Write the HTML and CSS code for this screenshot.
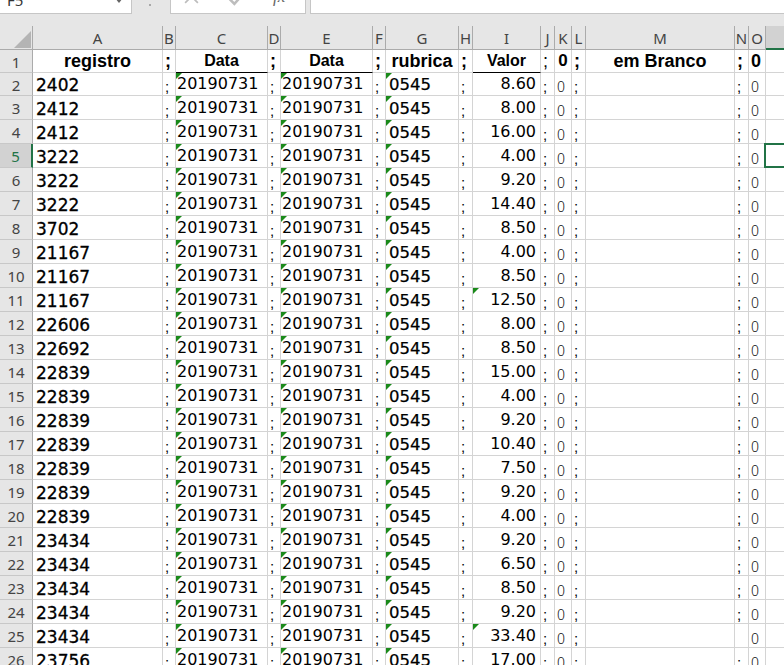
FILE: index.html
```html
<!DOCTYPE html>
<html>
<head>
<meta charset="utf-8">
<title>Planilha</title>
<link rel="stylesheet" href="styles.css">
</head>
<body>
<div class="topbar">
  <div class="namebox"><span class="nb-text">F5</span><span class="nb-arrow"></span></div>
  <div class="dots"></div>
  <div class="fbtns">
    <svg class="ic ic-x" viewBox="0 0 16 16"><path d="M2 2 L14 14 M14 2 L2 14" /></svg>
    <svg class="ic ic-ok" viewBox="0 0 16 16"><path d="M1 8 L6 13 L15 3" /></svg>
    <span class="fx">fx</span>
  </div>
  <div class="finput"></div>
</div>

<div class="sheet">
  <div class="hrow">
    <div class="ch corner"><svg class="selall" viewBox="0 0 16 16"><polygon points="16,0 16,16 0,16" /></svg></div>
    <div class="ch">A</div><div class="ch">B</div><div class="ch">C</div><div class="ch">D</div><div class="ch">E</div><div class="ch">F</div><div class="ch">G</div><div class="ch">H</div><div class="ch">I</div><div class="ch">J</div><div class="ch">K</div><div class="ch">L</div><div class="ch">M</div><div class="ch">N</div><div class="ch">O</div><div class="ch chsel">P</div>
  </div>

  <div class="row row1">
    <div class="rh">1</div>
    <div class="c h1">registro</div><div class="c h1 hs">;</div><div class="c h1 hd ul">Data</div><div class="c h1 hs">;</div><div class="c h1 hd ul">Data</div><div class="c h1 hs">;</div><div class="c h1">rubrica</div><div class="c h1 hs">;</div><div class="c h1 hd ul">Valor</div><div class="c h1 hs thin">;</div><div class="c h1 hz">0</div><div class="c h1 hs">;</div><div class="c h1">em Branco</div><div class="c h1 hs">;</div><div class="c h1 hs">0</div><div class="c"></div>
  </div>

  <div class="row r2"><div class="rh">2</div><div class="c ca">2402</div><div class="c sc">;</div><div class="c cd tri">20190731</div><div class="c sc">;</div><div class="c cd tri">20190731</div><div class="c sc">;</div><div class="c cg tri">0545</div><div class="c sc">;</div><div class="c cv">8.60</div><div class="c sc">;</div><div class="c cz">0</div><div class="c sc">;</div><div class="c"></div><div class="c sc">;</div><div class="c cz">0</div><div class="c"></div></div>
  <div class="row"><div class="rh">3</div><div class="c ca">2412</div><div class="c sc">;</div><div class="c cd tri">20190731</div><div class="c sc">;</div><div class="c cd tri">20190731</div><div class="c sc">;</div><div class="c cg tri">0545</div><div class="c sc">;</div><div class="c cv">8.00</div><div class="c sc">;</div><div class="c cz">0</div><div class="c sc">;</div><div class="c"></div><div class="c sc">;</div><div class="c cz">0</div><div class="c"></div></div>
  <div class="row"><div class="rh">4</div><div class="c ca">2412</div><div class="c sc">;</div><div class="c cd tri">20190731</div><div class="c sc">;</div><div class="c cd tri">20190731</div><div class="c sc">;</div><div class="c cg tri">0545</div><div class="c sc">;</div><div class="c cv">16.00</div><div class="c sc">;</div><div class="c cz">0</div><div class="c sc">;</div><div class="c"></div><div class="c sc">;</div><div class="c cz">0</div><div class="c"></div></div>
  <div class="row"><div class="rh rhsel">5</div><div class="c ca">3222</div><div class="c sc">;</div><div class="c cd tri">20190731</div><div class="c sc">;</div><div class="c cd tri">20190731</div><div class="c sc">;</div><div class="c cg tri">0545</div><div class="c sc">;</div><div class="c cv">4.00</div><div class="c sc">;</div><div class="c cz">0</div><div class="c sc">;</div><div class="c"></div><div class="c sc">;</div><div class="c cz">0</div><div class="c cur"></div></div>
  <div class="row"><div class="rh">6</div><div class="c ca">3222</div><div class="c sc">;</div><div class="c cd tri">20190731</div><div class="c sc">;</div><div class="c cd tri">20190731</div><div class="c sc">;</div><div class="c cg tri">0545</div><div class="c sc">;</div><div class="c cv">9.20</div><div class="c sc">;</div><div class="c cz">0</div><div class="c sc">;</div><div class="c"></div><div class="c sc">;</div><div class="c cz">0</div><div class="c"></div></div>
  <div class="row"><div class="rh">7</div><div class="c ca">3222</div><div class="c sc">;</div><div class="c cd tri">20190731</div><div class="c sc">;</div><div class="c cd tri">20190731</div><div class="c sc">;</div><div class="c cg tri">0545</div><div class="c sc">;</div><div class="c cv">14.40</div><div class="c sc">;</div><div class="c cz">0</div><div class="c sc">;</div><div class="c"></div><div class="c sc">;</div><div class="c cz">0</div><div class="c"></div></div>
  <div class="row"><div class="rh">8</div><div class="c ca">3702</div><div class="c sc">;</div><div class="c cd tri">20190731</div><div class="c sc">;</div><div class="c cd tri">20190731</div><div class="c sc">;</div><div class="c cg tri">0545</div><div class="c sc">;</div><div class="c cv">8.50</div><div class="c sc">;</div><div class="c cz">0</div><div class="c sc">;</div><div class="c"></div><div class="c sc">;</div><div class="c cz">0</div><div class="c"></div></div>
  <div class="row"><div class="rh">9</div><div class="c ca">21167</div><div class="c sc">;</div><div class="c cd tri">20190731</div><div class="c sc">;</div><div class="c cd tri">20190731</div><div class="c sc">;</div><div class="c cg tri">0545</div><div class="c sc">;</div><div class="c cv">4.00</div><div class="c sc">;</div><div class="c cz">0</div><div class="c sc">;</div><div class="c"></div><div class="c sc">;</div><div class="c cz">0</div><div class="c"></div></div>
  <div class="row"><div class="rh">10</div><div class="c ca">21167</div><div class="c sc">;</div><div class="c cd tri">20190731</div><div class="c sc">;</div><div class="c cd tri">20190731</div><div class="c sc">;</div><div class="c cg tri">0545</div><div class="c sc">;</div><div class="c cv">8.50</div><div class="c sc">;</div><div class="c cz">0</div><div class="c sc">;</div><div class="c"></div><div class="c sc">;</div><div class="c cz">0</div><div class="c"></div></div>
  <div class="row"><div class="rh">11</div><div class="c ca">21167</div><div class="c sc">;</div><div class="c cd tri">20190731</div><div class="c sc">;</div><div class="c cd tri">20190731</div><div class="c sc">;</div><div class="c cg tri">0545</div><div class="c sc">;</div><div class="c cv tri">12.50</div><div class="c sc">;</div><div class="c cz">0</div><div class="c sc">;</div><div class="c"></div><div class="c sc">;</div><div class="c cz">0</div><div class="c"></div></div>
  <div class="row"><div class="rh">12</div><div class="c ca">22606</div><div class="c sc">;</div><div class="c cd tri">20190731</div><div class="c sc">;</div><div class="c cd tri">20190731</div><div class="c sc">;</div><div class="c cg tri">0545</div><div class="c sc">;</div><div class="c cv">8.00</div><div class="c sc">;</div><div class="c cz">0</div><div class="c sc">;</div><div class="c"></div><div class="c sc">;</div><div class="c cz">0</div><div class="c"></div></div>
  <div class="row"><div class="rh">13</div><div class="c ca">22692</div><div class="c sc">;</div><div class="c cd tri">20190731</div><div class="c sc">;</div><div class="c cd tri">20190731</div><div class="c sc">;</div><div class="c cg tri">0545</div><div class="c sc">;</div><div class="c cv">8.50</div><div class="c sc">;</div><div class="c cz">0</div><div class="c sc">;</div><div class="c"></div><div class="c sc">;</div><div class="c cz">0</div><div class="c"></div></div>
  <div class="row"><div class="rh">14</div><div class="c ca">22839</div><div class="c sc">;</div><div class="c cd tri">20190731</div><div class="c sc">;</div><div class="c cd tri">20190731</div><div class="c sc">;</div><div class="c cg tri">0545</div><div class="c sc">;</div><div class="c cv">15.00</div><div class="c sc">;</div><div class="c cz">0</div><div class="c sc">;</div><div class="c"></div><div class="c sc">;</div><div class="c cz">0</div><div class="c"></div></div>
  <div class="row"><div class="rh">15</div><div class="c ca">22839</div><div class="c sc">;</div><div class="c cd tri">20190731</div><div class="c sc">;</div><div class="c cd tri">20190731</div><div class="c sc">;</div><div class="c cg tri">0545</div><div class="c sc">;</div><div class="c cv">4.00</div><div class="c sc">;</div><div class="c cz">0</div><div class="c sc">;</div><div class="c"></div><div class="c sc">;</div><div class="c cz">0</div><div class="c"></div></div>
  <div class="row"><div class="rh">16</div><div class="c ca">22839</div><div class="c sc">;</div><div class="c cd tri">20190731</div><div class="c sc">;</div><div class="c cd tri">20190731</div><div class="c sc">;</div><div class="c cg tri">0545</div><div class="c sc">;</div><div class="c cv">9.20</div><div class="c sc">;</div><div class="c cz">0</div><div class="c sc">;</div><div class="c"></div><div class="c sc">;</div><div class="c cz">0</div><div class="c"></div></div>
  <div class="row"><div class="rh">17</div><div class="c ca">22839</div><div class="c sc">;</div><div class="c cd tri">20190731</div><div class="c sc">;</div><div class="c cd tri">20190731</div><div class="c sc">;</div><div class="c cg tri">0545</div><div class="c sc">;</div><div class="c cv">10.40</div><div class="c sc">;</div><div class="c cz">0</div><div class="c sc">;</div><div class="c"></div><div class="c sc">;</div><div class="c cz">0</div><div class="c"></div></div>
  <div class="row"><div class="rh">18</div><div class="c ca">22839</div><div class="c sc">;</div><div class="c cd tri">20190731</div><div class="c sc">;</div><div class="c cd tri">20190731</div><div class="c sc">;</div><div class="c cg tri">0545</div><div class="c sc">;</div><div class="c cv">7.50</div><div class="c sc">;</div><div class="c cz">0</div><div class="c sc">;</div><div class="c"></div><div class="c sc">;</div><div class="c cz">0</div><div class="c"></div></div>
  <div class="row"><div class="rh">19</div><div class="c ca">22839</div><div class="c sc">;</div><div class="c cd tri">20190731</div><div class="c sc">;</div><div class="c cd tri">20190731</div><div class="c sc">;</div><div class="c cg tri">0545</div><div class="c sc">;</div><div class="c cv">9.20</div><div class="c sc">;</div><div class="c cz">0</div><div class="c sc">;</div><div class="c"></div><div class="c sc">;</div><div class="c cz">0</div><div class="c"></div></div>
  <div class="row"><div class="rh">20</div><div class="c ca">22839</div><div class="c sc">;</div><div class="c cd tri">20190731</div><div class="c sc">;</div><div class="c cd tri">20190731</div><div class="c sc">;</div><div class="c cg tri">0545</div><div class="c sc">;</div><div class="c cv">4.00</div><div class="c sc">;</div><div class="c cz">0</div><div class="c sc">;</div><div class="c"></div><div class="c sc">;</div><div class="c cz">0</div><div class="c"></div></div>
  <div class="row"><div class="rh">21</div><div class="c ca">23434</div><div class="c sc">;</div><div class="c cd tri">20190731</div><div class="c sc">;</div><div class="c cd tri">20190731</div><div class="c sc">;</div><div class="c cg tri">0545</div><div class="c sc">;</div><div class="c cv">9.20</div><div class="c sc">;</div><div class="c cz">0</div><div class="c sc">;</div><div class="c"></div><div class="c sc">;</div><div class="c cz">0</div><div class="c"></div></div>
  <div class="row"><div class="rh">22</div><div class="c ca">23434</div><div class="c sc">;</div><div class="c cd tri">20190731</div><div class="c sc">;</div><div class="c cd tri">20190731</div><div class="c sc">;</div><div class="c cg tri">0545</div><div class="c sc">;</div><div class="c cv">6.50</div><div class="c sc">;</div><div class="c cz">0</div><div class="c sc">;</div><div class="c"></div><div class="c sc">;</div><div class="c cz">0</div><div class="c"></div></div>
  <div class="row"><div class="rh">23</div><div class="c ca">23434</div><div class="c sc">;</div><div class="c cd tri">20190731</div><div class="c sc">;</div><div class="c cd tri">20190731</div><div class="c sc">;</div><div class="c cg tri">0545</div><div class="c sc">;</div><div class="c cv">8.50</div><div class="c sc">;</div><div class="c cz">0</div><div class="c sc">;</div><div class="c"></div><div class="c sc">;</div><div class="c cz">0</div><div class="c"></div></div>
  <div class="row"><div class="rh">24</div><div class="c ca">23434</div><div class="c sc">;</div><div class="c cd tri">20190731</div><div class="c sc">;</div><div class="c cd tri">20190731</div><div class="c sc">;</div><div class="c cg tri">0545</div><div class="c sc">;</div><div class="c cv">9.20</div><div class="c sc">;</div><div class="c cz">0</div><div class="c sc">;</div><div class="c"></div><div class="c sc">;</div><div class="c cz">0</div><div class="c"></div></div>
  <div class="row"><div class="rh">25</div><div class="c ca">23434</div><div class="c sc">;</div><div class="c cd tri">20190731</div><div class="c sc">;</div><div class="c cd tri">20190731</div><div class="c sc">;</div><div class="c cg tri">0545</div><div class="c sc">;</div><div class="c cv tri">33.40</div><div class="c sc">;</div><div class="c cz">0</div><div class="c sc">;</div><div class="c"></div><div class="c"></div><div class="c cz">0</div><div class="c"></div></div>
  <div class="row"><div class="rh">26</div><div class="c ca">23756</div><div class="c sc">;</div><div class="c cd tri">20190731</div><div class="c sc">;</div><div class="c cd tri">20190731</div><div class="c sc">;</div><div class="c cg tri">0545</div><div class="c sc">;</div><div class="c cv">17.00</div><div class="c sc">;</div><div class="c cz">0</div><div class="c sc">;</div><div class="c"></div><div class="c sc">;</div><div class="c cz">0</div><div class="c"></div></div>
</div>
</body>
</html>
```

FILE: styles.css
```css
html, body {
  margin: 0;
  padding: 0;
}
body {
  width: 784px;
  height: 665px;
  overflow: hidden;
  background: #ffffff;
  font-family: "Liberation Sans", Arial, sans-serif;
}

/* ---------- formula bar ---------- */
.topbar {
  height: 26px;
  background: #e6e6e6;
  display: flex;
  align-items: flex-start;
  overflow: hidden;
}
.namebox {
  box-sizing: border-box;
  width: 133px;
  height: 28px;
  margin: -14px 0 0 -1px;
  background: #ffffff;
  border: 1px solid #c6c6c6;
  display: flex;
  align-items: center;
  padding-left: 7px;
}
.nb-text {
  font: 15px/28px "Noto Sans", "Liberation Sans", sans-serif;
  color: #333;
}
.nb-arrow {
  margin-left: auto;
  margin-right: 8px;
  width: 0;
  height: 0;
  border-top: 5px solid #666;
  border-left: 4px solid transparent;
  border-right: 4px solid transparent;
}
.dots {
  width: 2px;
  height: 2px;
  margin: 4px 0 0 17px;
  background: #a8a8a8;
}
.fbtns {
  box-sizing: border-box;
  width: 136px;
  height: 28px;
  margin: -14px 0 0 19px;
  background: #ffffff;
  border: 1px solid #c6c6c6;
  display: flex;
  align-items: flex-end;
  padding: 0 0 8px 12px;
}
.ic {
  width: 17px;
  height: 17px;
  fill: none;
  stroke: #bdbdbd;
  stroke-width: 1.6;
}
.ic-ok {
  margin-left: 28px;
  margin-bottom: -2px;
  stroke-width: 2.4;
}
.fx {
  margin-left: 28px;
  font: italic 17px/17px "Liberation Serif", serif;
  color: #666;
}
.finput {
  box-sizing: border-box;
  flex: 1;
  height: 28px;
  margin: -14px 0 0 4px;
  background: #ffffff;
  border: 1px solid #c6c6c6;
  border-right: none;
}

/* ---------- sheet ---------- */
.sheet {
  width: 784px;
  overflow: hidden;
}
.hrow, .row {
  display: grid;
  grid-template-columns: 33px 130px 13px 92px 13px 92px 13px 73px 14px 68px 14px 17px 14px 149px 14px 17px 80px;
}
.hrow { height: 24px; }
.row { height: 24px; }
.row1 { height: 23px; }
.r2 { height: 23px; }

.ch {
  box-sizing: border-box;
  background: #e6e6e6;
  border-right: 1px solid #ababab;
  border-bottom: 1px solid #ababab;
  display: flex;
  align-items: center;
  justify-content: center;
  font: 15px/16px "Noto Sans", "Liberation Sans", sans-serif;
  color: #444;
  padding-top: 1px;
}
.corner {
  justify-content: flex-end;
  align-items: flex-end;
  padding: 0 1px 1px 0;
}
.selall {
  width: 17px;
  height: 17px;
  fill: #b4b4b4;
}
.chsel {
  background: #d2d2d2;
  border-bottom: 2px solid #217346;
  color: #217346;
}

.rh {
  box-sizing: border-box;
  background: #e6e6e6;
  border-right: 1px solid #ababab;
  border-bottom: 1px solid #c8c8c8;
  display: flex;
  align-items: center;
  justify-content: center;
  font: 15px/16px "Noto Sans", "Liberation Sans", sans-serif;
  color: #444;
  padding-top: 1px;
}
.rhsel {
  background: #d2d2d2;
  border-right: 2px solid #217346;
  color: #217346;
}

.c {
  box-sizing: border-box;
  position: relative;
  border-right: 1px solid #d4d4d4;
  border-bottom: 1px solid #d4d4d4;
  display: flex;
  align-items: flex-end;
  white-space: nowrap;
  color: #000;
}

/* header row 1 */
.h1 {
  justify-content: center;
  font: bold 18px/18px "Liberation Sans", Arial, sans-serif;
  padding-bottom: 2px;
}
.hd { font-size: 16px; }
.hs {
  justify-content: flex-start;
  padding-left: 2px;
}
.hz { font-size: 17px; }
.thin { font-weight: normal; }
.ul { border-bottom: 1px solid #000; }

/* data cells */
.ca {
  font: 17px/16px "DejaVu Sans", Verdana, sans-serif;
  -webkit-text-stroke: 0.3px #000;
  padding: 0 0 2px 3px;
}
.cd {
  font: 16px/16px "DejaVu Sans", Verdana, sans-serif;
  padding: 0 0 3px 1px;
}
.cg {
  font: 16.5px/16px "DejaVu Sans", Verdana, sans-serif;
  -webkit-text-stroke: 0.25px #000;
  padding: 0 0 2px 3px;
}
.cv {
  justify-content: flex-end;
  font: 16px/16px "DejaVu Sans", Verdana, sans-serif;
  padding: 0 4px 3px 0;
}
.cz {
  font: 300 14px/14px "Noto Sans", "Liberation Sans", sans-serif;
  color: #111;
  padding: 0 0 1px 2px;
}
.sc {
  font: 15px/15px "Liberation Sans", Arial, sans-serif;
  padding: 0 0 1px 2px;
}

/* green error indicator */
.tri::before {
  content: "";
  position: absolute;
  left: 0;
  top: 0;
  width: 0;
  height: 0;
  border-top: 6px solid #1a8a1a;
  border-right: 6px solid transparent;
}

/* active cell */
.cur::after {
  content: "";
  position: absolute;
  left: -2px;
  top: -1px;
  right: -4px;
  bottom: -1px;
  border: 2px solid #217346;
}
```
